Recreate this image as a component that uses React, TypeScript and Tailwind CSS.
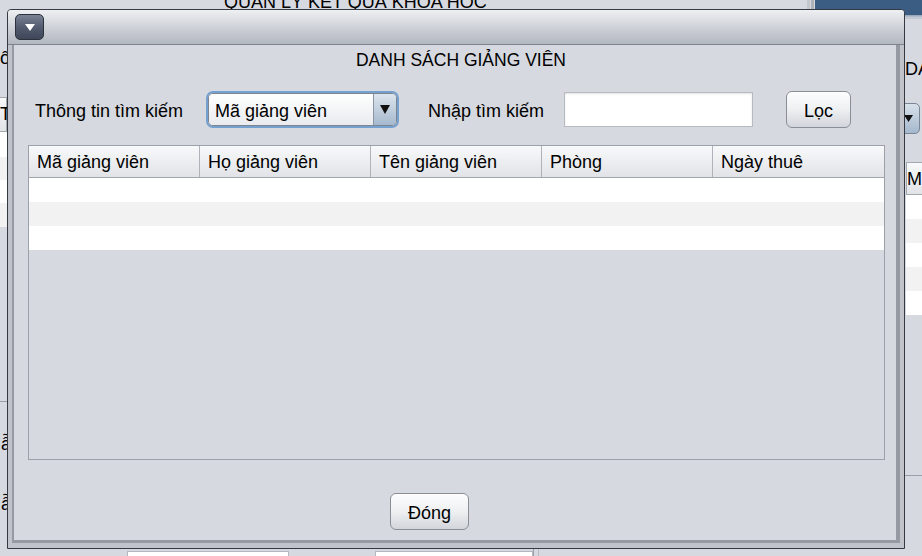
import React from "react";

const font = { fontFamily: '"Liberation Sans", Arial, sans-serif' };

function Btn({ label, w }: { label: string; w: string }) {
  return (
    <div
      className={`${w} h-[37px] pt-[3px] rounded-[6px] border border-[#8a8e96] bg-gradient-to-b from-[#fdfdfe] via-[#eef0f2] to-[#d2d5db] flex items-center justify-center text-[18px] text-black shadow-[inset_0_1px_0_#ffffff]`}
    >
      {label}
    </div>
  );
}

function HeaderGrad({ className, children }: { className: string; children?: React.ReactNode }) {
  return (
    <div className={`bg-gradient-to-b from-[#f8f9fa] to-[#e1e3e7] text-[18px] whitespace-nowrap ${className}`}>{children}</div>
  );
}

export default function App() {
  const cols = ["Mã giảng viên", "Họ giảng viên", "Tên giảng viên", "Phòng", "Ngày thuê"];
  return (
    <div className="relative w-[922px] h-[556px] overflow-hidden bg-[#d6d9df] text-black" style={font}>
      {/* ---------- background window (main frame, mostly hidden) ---------- */}
      <div className="absolute inset-0 flex flex-col">
        {/* top band */}
        <div className="h-[18px] flex shrink-0">
          <div className="flex-1 overflow-hidden pl-[224px]">
            <div className="-mt-[7px] text-[18px] leading-none whitespace-nowrap">QUẢN LÝ KẾT QUẢ KHÓA HỌC</div>
          </div>
          <div className="w-[3px] h-[20px] bg-[#c3c6cc]" />
          <div className="ml-[1px] w-[3px] h-[20px] bg-[#aeb2b9]" />
          <div className="ml-[1px] w-[107px] flex flex-col">
            <div className="h-[15px] bg-[#3b5d83]" />
            <div className="h-[3px] bg-gradient-to-b from-[#8ea0b5] to-[#d0d4da]" />
          </div>
        </div>
        {/* middle band */}
        <div className="flex-1 flex justify-between">
          {/* left strip */}
          <div className="w-[7px] flex flex-col overflow-hidden">
            <div className="mt-[30px] -ml-[12px] h-[20px] text-[18px] leading-[20px] whitespace-nowrap">Sô</div>
            <HeaderGrad className="mt-[29px] -ml-[20px] w-[27px] h-[35px] shrink-0 border border-[#a4a8af] leading-[33px] pl-[19px]">T</HeaderGrad>
            <div className="h-[25px] bg-white shrink-0" />
            <div className="h-[23px] bg-[#f2f2f2] shrink-0" />
            <div className="h-[23px] bg-white shrink-0" />
            <div className="h-[24px] bg-[#f2f2f2] shrink-0" />
            <div className="mt-[174px] h-[1px] bg-[#9a9ea6] shrink-0" />
            <div className="mt-[32px] -ml-[14px] h-[20px] text-[18px] leading-[20px] whitespace-nowrap">Mẫ</div>
            <div className="mt-[40px] -ml-[14px] h-[20px] text-[18px] leading-[20px] whitespace-nowrap">Mẫ</div>
          </div>
          {/* right strip */}
          <div className="w-[17px] flex flex-col overflow-hidden">
            <div className="h-[1px] bg-[#c4c7cd] shrink-0" />
            <div className="mt-[40px] h-[20px] text-[18px] leading-[20px] whitespace-nowrap">DANH</div>
            <div className="mt-[24px] -ml-[7px] w-[22px] h-[31px] shrink-0 rounded-[5px] border border-[#7a8696] bg-gradient-to-b from-[#d8e1ea] to-[#a4b8cd] flex items-center justify-end pr-[6px]">
              <svg width="9" height="7" viewBox="0 0 9 7"><path d="M0 0h9L4.5 7z" fill="#111" /></svg>
            </div>
            <HeaderGrad className="mt-[28px] ml-[1px] w-[24px] h-[33px] shrink-0 border-t border-b border-l border-[#a4a8af] leading-[33px]">Mã</HeaderGrad>
            <div className="ml-[1px] h-[24px] bg-white shrink-0" />
            <div className="ml-[1px] h-[24px] bg-[#f2f2f2] shrink-0" />
            <div className="ml-[1px] h-[24px] bg-white shrink-0" />
            <div className="ml-[1px] h-[24px] bg-[#f2f2f2] shrink-0" />
            <div className="ml-[1px] h-[24px] bg-white shrink-0" />
            <div className="mt-[160px] h-[1px] bg-[#9a9ea6] shrink-0" />
          </div>
        </div>
        {/* bottom band */}
        <div className="h-[7px] shrink-0 flex pt-[2px]">
          <div className="ml-[127px] w-[162px] h-[10px] border border-[#b3b7be] bg-white" />
          <div className="ml-[86px] w-[158px] h-[10px] border border-[#b3b7be] bg-white" />
          <div className="-mt-[2px] w-[1px] h-[9px] bg-[#9a9ea6]" />
          <div className="-mt-[2px] ml-[4px] w-[1px] h-[9px] bg-[#b8bcc2]" />
        </div>
      </div>

      {/* ---------- internal frame (dialog window) ---------- */}
      <div className="absolute left-[7px] top-[9px] w-[898px] h-[540px] border border-[#353941] rounded-t-[4px] flex flex-col bg-[#c0c4ca] overflow-hidden">
        <div className="h-[35px] shrink-0 border-b border-[#7e838c] bg-gradient-to-b from-[#eef0f2] via-[#cfd2d8] to-[#b3b7bf] flex items-center pl-[7px]">
          <div className="w-[29px] h-[26px] rounded-[5px] border border-[#2c323d] bg-gradient-to-b from-[#7a8294] via-[#535c70] to-[#3e4658] flex items-center justify-center">
            <svg width="10" height="7" viewBox="0 0 10 7"><path d="M0 0h10L5 7z" fill="#ffffff" /></svg>
          </div>
        </div>
        <div className="flex-1 flex px-[4px] pb-[5px]">
          <div className="flex-1 flex flex-col bg-[#d6d9df] border-l-2 border-r-4 border-b-[3px] border-[#959aa2]">
            <div className="mt-[5px] h-[20px] leading-[20px] text-[17.5px] text-center pl-[12px] whitespace-nowrap">DANH SÁCH GIẢNG VIÊN</div>
            <div className="mt-[21px] h-[37px] flex items-center pl-[21px]">
              <div className="w-[171px] pt-[3px] text-[18px] whitespace-nowrap">Thông tin tìm kiếm</div>
              <div className="w-[193px] h-[37px] rounded-[7px] border-2 border-[#74a1d0] flex">
                <div className="flex-1 flex rounded-[5px] border border-[#7d8591] overflow-hidden">
                  <div className="flex-1 bg-gradient-to-b from-[#ffffff] to-[#e9ebef] text-[18px] leading-[31px] pt-[2px] pl-[6px] whitespace-nowrap">Mã giảng viên</div>
                  <div className="w-[23px] border-l border-[#8a96a6] bg-gradient-to-b from-[#dde5ee] to-[#a6b9ce] flex items-center justify-center">
                    <svg width="10" height="9" viewBox="0 0 10 9"><path d="M0 0h10L5 9z" fill="#111" /></svg>
                  </div>
                </div>
              </div>
              <div className="ml-[29px] w-[136px] pt-[3px] text-[18px] whitespace-nowrap">Nhập tìm kiếm</div>
              <div className="w-[189px] h-[35px] border border-[#b6bac1] bg-white shadow-[inset_0_1px_2px_rgba(0,0,0,0.12)]" />
              <div className="ml-[33px]">
                <Btn label="Lọc" w="w-[65px]" />
              </div>
            </div>
            <div className="mt-[17px] ml-[14px] w-[857px] h-[315px] border border-[#9ca0a8] flex flex-col">
              <div className="h-[32px] flex border-b border-[#a2a6ad]">
                {cols.map((c, i) => (
                  <HeaderGrad
                    key={c}
                    className={`w-[171px] h-full pl-[8px] pt-[1px] leading-[31px] ${i < 4 ? "border-r border-[#aeb2b9]" : ""}`}
                  >
                    {c}
                  </HeaderGrad>
                ))}
              </div>
              <div className="h-[24px] bg-white" />
              <div className="h-[24px] bg-[#f2f2f2]" />
              <div className="h-[24px] bg-white" />
            </div>
            <div className="mt-[33px] ml-[376px]">
              <Btn label="Đóng" w="w-[79px]" />
            </div>
          </div>
        </div>
      </div>
    </div>
  );
}
